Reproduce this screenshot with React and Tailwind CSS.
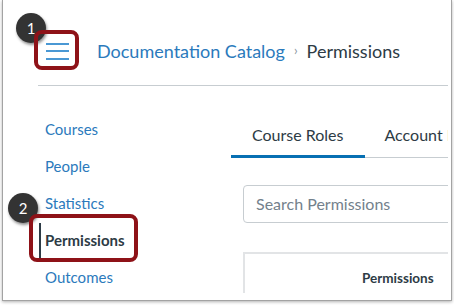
import React from 'react';

const navItems = ['Courses', 'People', 'Statistics', 'Permissions', 'Outcomes'];

const Badge = ({ n, className }) => (
    <div className={`absolute w-[30px] h-[30px] rounded-full bg-[#333] text-white text-[15px] flex items-center justify-center shadow-[1px_2px_3px_rgba(0,0,0,0.45)] ${className}`}>
        {n}
    </div>
);

const App = () => {
    return (
        <div className="relative w-[454px] h-[305px] bg-white overflow-hidden font-['Lato','Open_Sans',sans-serif]">
            <div className="ml-[2px] w-[450px] h-[301px] border-x border-b border-[#a3a3a3] shadow-[0_1px_3px_rgba(0,0,0,0.3)] pr-[3px] pb-[7px]">
                <div className="w-full h-full overflow-hidden">
                    {/* header */}
                    <div className="ml-[35px] h-[86px] border-b border-[#c7cdd1] flex items-start">
                        <div className="mt-[33px] h-[36px] flex items-center">
                            <button className="w-[38px] h-[36px] flex flex-col items-center justify-center gap-[5.5px]">
                                <span className="block w-[23px] h-[2px] bg-[#4a98d4]" />
                                <span className="block w-[23px] h-[2px] bg-[#4a98d4]" />
                                <span className="block w-[23px] h-[2px] bg-[#4a98d4]" />
                            </button>
                            <div className="ml-[21px] flex items-center text-[18px] whitespace-nowrap">
                                <span className="text-[#2b7abc]">Documentation Catalog</span>
                                <span className="mx-[9px] text-[#8b969e] text-[13px]">›</span>
                                <span className="text-[#2d3b45]">Permissions</span>
                            </div>
                        </div>
                    </div>

                    {/* body */}
                    <div className="flex">
                        <nav className="w-[228px] shrink-0 pl-[36px] pt-[25px]">
                            {navItems.map((item) => {
                                const active = item === 'Permissions';
                                return (
                                    <div key={item} className="h-[37px] flex items-center">
                                        <span className={`w-[2px] h-[35px] ${active ? 'bg-[#2d3b45]' : 'bg-transparent'}`} />
                                        <span className={`pl-[4px] text-[15px] ${active ? 'font-bold text-[#2d3b45]' : 'text-[#2b7abc]'}`}>{item}</span>
                                    </div>
                                );
                            })}
                        </nav>

                        <main className="flex-1 min-w-0 pt-[37px]">
                            <div className="flex border-b border-[#c7cdd1] whitespace-nowrap">
                                <div className="-mb-px px-[21px] pb-[8px] leading-[24px] text-[16px] text-[#2d3b45] border-b-[3px] border-[#0770b3]">
                                    Course Roles
                                </div>
                                <div className="-mb-px pl-[20px] pb-[8px] leading-[24px] text-[16px] text-[#2d3b45] border-b-[3px] border-transparent">
                                    Account Roles
                                </div>
                            </div>

                            <div className="ml-[12px] mt-[27px] w-[230px] h-[38px] border border-[#c7cdd1] rounded-[4px] flex items-center pl-[12px] text-[16px] text-[#73818c] whitespace-nowrap">
                                Search Permissions
                            </div>

                            <div className="ml-[12px] mt-[29px] w-[230px] h-[60px] border-t-2 border-l-2 border-[#e2e4e6] pl-[117px] pt-[14px] text-[13.5px] font-bold text-[#2d3b45]">
                                Permissions
                            </div>
                        </main>
                    </div>
                </div>
            </div>

            {/* annotations */}
            <Badge n="1" className="left-[16px] top-[13px]" />
            <div className="absolute left-[34px] top-[30px] w-[45px] h-[40px] border-[4px] border-[#8e1218] rounded-[8px]" />
            <Badge n="2" className="left-[8px] top-[193px]" />
            <div className="absolute left-[29px] top-[214px] w-[109px] h-[48px] border-[4px] border-[#8e1218] rounded-[8px]" />
        </div>
    );
};

export default App;
